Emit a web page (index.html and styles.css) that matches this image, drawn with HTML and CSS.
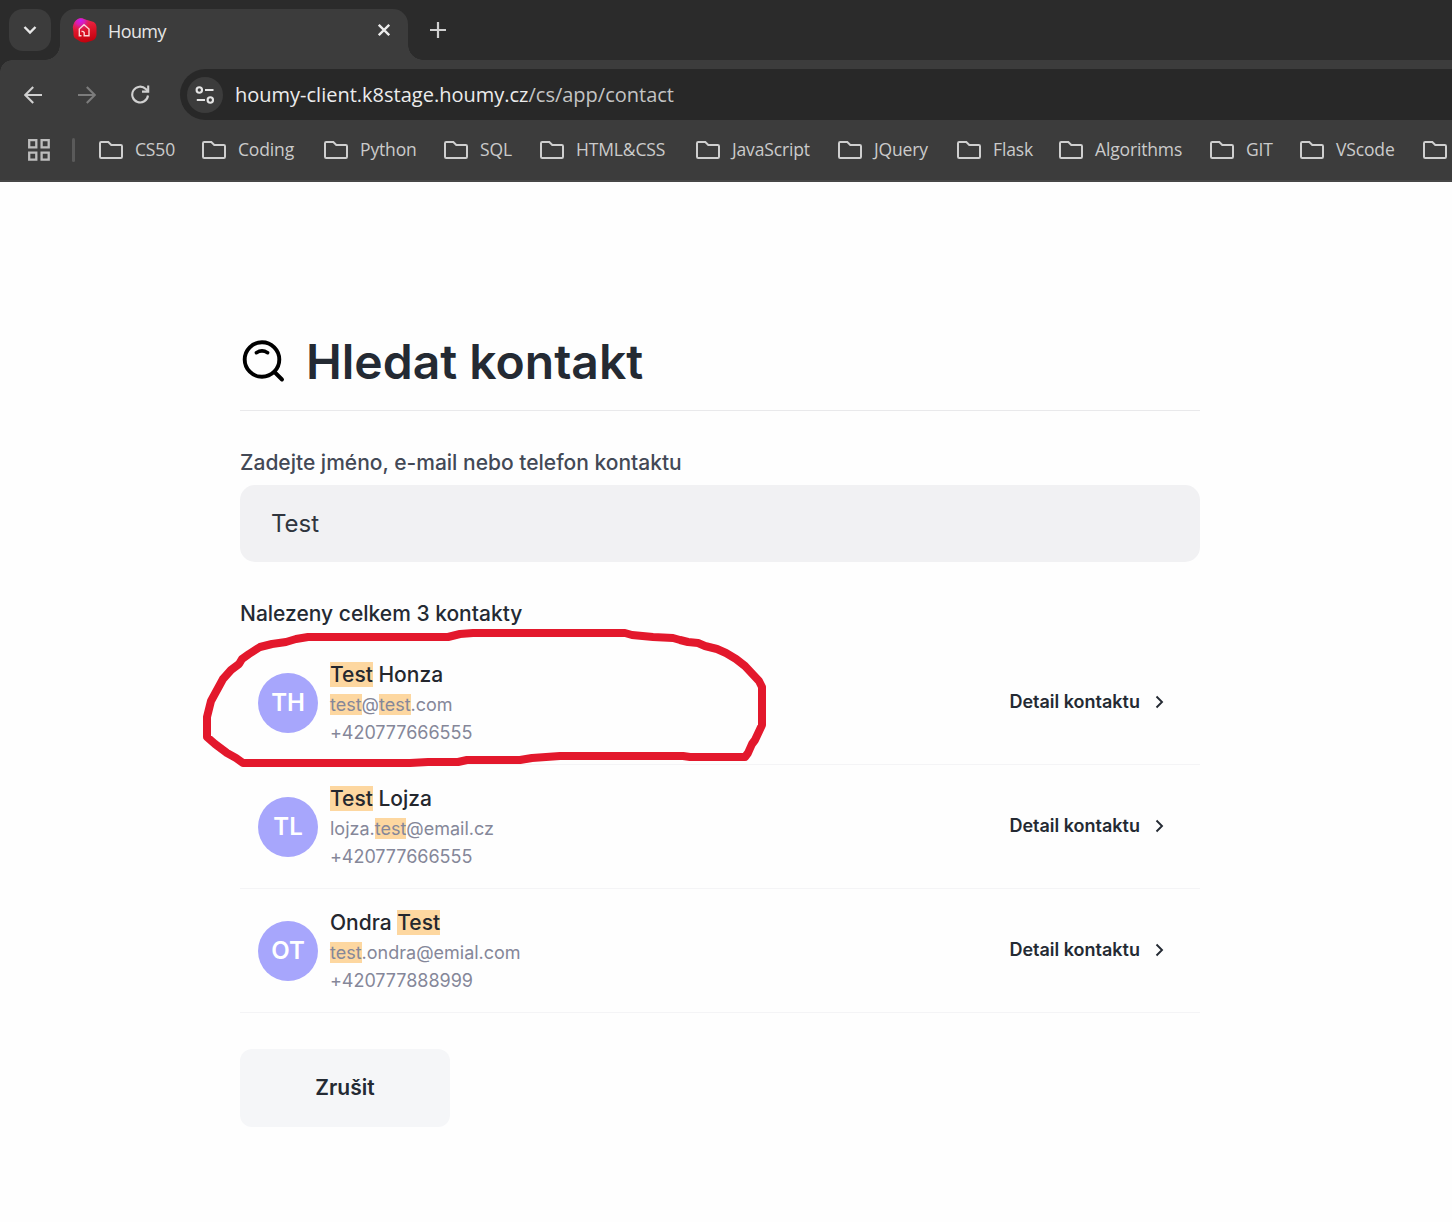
FILE: index.html
```html
<!DOCTYPE html>
<html lang="cs">
<head>
<meta charset="utf-8">
<title>Houmy</title>
<link rel="stylesheet" href="styles.css">
</head>
<body>
<svg class="defs" width="0" height="0" aria-hidden="true">
  <symbol id="folder" viewBox="0 0 24 18"><path d="M2.2 1H9.3L12.3 4H21.8Q23 4 23 5.200V15.800Q23 17 21.800 17H2.200Q1 17 1 15.800V2.200Q1 1 2.200 1Z" fill="none" stroke="#cfcfcf" stroke-width="2"/></symbol>
  <symbol id="chevron" viewBox="0 0 9 14"><path d="M1.500 1.500L7 7L1.500 12.500" fill="none" stroke="#242a33" stroke-width="1.900"/></symbol>
</svg>
<header class="browser">
  <div class="tabstrip">
    <button class="tab-search" aria-label="Tabs"><svg width="14" height="10" viewBox="0 0 14 10"><path d="M1.500 2L7 7.500L12.500 2" fill="none" stroke="#e8e8e8" stroke-width="2.400"/></svg></button>
    <div class="tab">
      <svg class="favicon" width="25" height="25" viewBox="0 0 25 25">
        <defs>
          <linearGradient id="red" x1=".4" y1="0" x2=".6" y2="1"><stop offset="0" stop-color="#f02c50"/><stop offset=".5" stop-color="#dc1428"/><stop offset="1" stop-color="#c0000c"/></linearGradient>
          <radialGradient id="pink" cx=".32" cy=".08" r=".5"><stop offset="0" stop-color="#c61cf5"/><stop offset=".4" stop-color="#d81cb8" stop-opacity=".9"/><stop offset="1" stop-color="#e01840" stop-opacity="0"/></radialGradient>
        </defs>
        <path d="M6 1Q9-.5 13 1.500L20 3.500Q24 4 24.500 9V17Q24 22 19 23L14 24.500Q9 25 5 21.500Q1 20 1.500 15L.8 9Q2 3 6 1Z" fill="url(#red)"/>
        <path d="M6 1Q9-.5 13 1.500L20 3.500Q24 4 24.500 9V17Q24 22 19 23L14 24.500Q9 25 5 21.500Q1 20 1.500 15L.8 9Q2 3 6 1Z" fill="url(#pink)"/>
        <path d="M9.500 17.800H7.300V11L12 6.800L17 11V17.800H12.200V14.500Q11 13 9.500 13.500" fill="none" stroke="#fbd5d6" stroke-width="1.400"/>
      </svg>
      <span class="tab-title">Houmy</span>
      <svg class="close" width="12" height="12" viewBox="0 0 12 12"><path d="M.8.8L11.200 11.200M11.200.8L.8 11.200" stroke="#ececec" stroke-width="2.300"/></svg>
    </div>
    <svg class="new-tab" width="16" height="16" viewBox="0 0 16 16"><path d="M8 0V16M0 8H16" stroke="#d0d0d0" stroke-width="2.200"/></svg>
  </div>
  <div class="toolbar">
    <svg width="18" height="18" viewBox="0 0 18 18"><path d="M18 9H1.500M9.200.9L1.200 9L9.200 17.100" fill="none" stroke="#d0d0d0" stroke-width="2.100"/></svg>
    <svg width="18" height="18" viewBox="0 0 18 18"><path d="M0 9H16.500M8.800.9L16.800 9L8.800 17.100" fill="none" stroke="#7c7c7c" stroke-width="2.100"/></svg>
    <svg width="19" height="19" viewBox="0 0 19 19"><path d="M17 10.500A7.900 7.900 0 1 1 14.800 4L17 6.200" fill="none" stroke="#d0d0d0" stroke-width="2.100"/><path d="M17.200 .5V6.600H11" fill="none" stroke="#d0d0d0" stroke-width="2.100"/></svg>
    <div class="omnibox">
      <span class="site-info"><svg width="20" height="18" viewBox="0 0 20 18"><g fill="none" stroke="#e4e4e4" stroke-width="2.100"><circle cx="4.300" cy="4" r="2.700"/><path d="M10 4H18.500M1.800 14H10"/><circle cx="15.300" cy="14" r="2.700"/></g></svg></span>
      <span class="url"><span class="host">houmy-client.k8stage.houmy.cz</span>/cs/app/contact</span>
    </div>
  </div>
  <nav class="bookmarks">
    <svg class="apps" width="22" height="22" viewBox="0 0 22 22"><path d="M1.200 1.200H8.300V8.300H1.200ZM13.600 1.200H20.700V8.300H13.600ZM1.200 13.600H8.300V20.700H1.200ZM13.600 13.600H20.700V20.700H13.600Z" fill="none" stroke="#bdbdbd" stroke-width="2.300"/></svg>
    <i class="divider"></i>
    <div class="folders">
      <span class="folder"><svg><use href="#folder"/></svg><span>CS50</span></span>
      <span class="folder"><svg><use href="#folder"/></svg><span>Coding</span></span>
      <span class="folder"><svg><use href="#folder"/></svg><span>Python</span></span>
      <span class="folder"><svg><use href="#folder"/></svg><span>SQL</span></span>
      <span class="folder"><svg><use href="#folder"/></svg><span>HTML&amp;CSS</span></span>
      <span class="folder"><svg><use href="#folder"/></svg><span>JavaScript</span></span>
      <span class="folder"><svg><use href="#folder"/></svg><span>JQuery</span></span>
      <span class="folder"><svg><use href="#folder"/></svg><span>Flask</span></span>
      <span class="folder"><svg><use href="#folder"/></svg><span>Algorithms</span></span>
      <span class="folder"><svg><use href="#folder"/></svg><span>GIT</span></span>
      <span class="folder"><svg><use href="#folder"/></svg><span>VScode</span></span>
      <span class="folder"><svg><use href="#folder"/></svg></span>
    </div>
  </nav>
</header>
<main class="page">
  <div class="title">
    <svg width="44" height="44" viewBox="0 0 44 44"><g fill="none" stroke="#000" stroke-width="3.900" stroke-linecap="round"><circle cx="21" cy="20.500" r="17.300"/><path d="M34 33.500L41 40.500"/><path d="M15.400 13.700Q21 10.100 26.600 13.700" stroke-width="3.500"/></g></svg>
    <h1>Hledat kontakt</h1>
  </div>
  <label class="label" for="q">Zadejte jméno, e-mail nebo telefon kontaktu</label>
  <input class="search" id="q" value="Test">
  <p class="summary">Nalezeny celkem 3 kontakty</p>
  <ul class="contacts">
    <li class="contact">
      <span class="avatar">TH</span>
      <div class="info"><div class="name"><mark>Test</mark> Honza</div><div class="line"><mark>test</mark>@<mark>test</mark>.com</div><div class="line phone">+420777666555</div></div>
      <a class="detail">Detail kontaktu<svg width="9" height="14"><use href="#chevron"/></svg></a>
    </li>
    <li class="contact">
      <span class="avatar">TL</span>
      <div class="info"><div class="name"><mark>Test</mark> Lojza</div><div class="line">lojza.<mark>test</mark>@email.cz</div><div class="line phone">+420777666555</div></div>
      <a class="detail">Detail kontaktu<svg width="9" height="14"><use href="#chevron"/></svg></a>
    </li>
    <li class="contact">
      <span class="avatar">OT</span>
      <div class="info"><div class="name">Ondra <mark>Test</mark></div><div class="line"><mark>test</mark>.ondra@emial.com</div><div class="line phone">+420777888999</div></div>
      <a class="detail">Detail kontaktu<svg width="9" height="14"><use href="#chevron"/></svg></a>
    </li>
  </ul>
  <button class="cancel">Zrušit</button>
</main>
<svg class="marker" width="566" height="142" viewBox="200 627 566 142"><path d="M308 637L296 639L286 642L272 644L260 647L249 654L242 659L239 664L231 670L223 679L211 701L207 717V737L215 744L227 753L236 758L243 763H410L428 762H458L467 760L520 760L532 758L560 756H683L690 757H745L748 753L752 744L755 740L762 725V687L759 681L745 666L736 659L726 653L717 649L705 646L698 643L688 642L680 640L673 638L653 637L632 635L625 633L618 633H473L460 634L448 637Z"/></svg>
</body>
</html>
```
FILE: styles.css
```css
* { box-sizing: border-box; }
body { margin: 0; height: 1222px; overflow: hidden; background: #fefefe; font-family: Inter, sans-serif; color: #242a33; }
button { border: 0; padding: 0; font-family: inherit; }
svg { display: block; flex: none; }
.defs { position: absolute; }

.browser { height: 182px; background: #3c3c3c; border-bottom: 2px solid #474747; font-family: "Open Sans", "Noto Sans", sans-serif; overflow: hidden; }
.tabstrip { display: flex; height: 60px; padding: 9px 0 0 9px; background: #2b2b2b; }
.tab-search { position: relative; z-index: 1; display: flex; align-items: center; justify-content: center; width: 42px; height: 42px; border-radius: 14px; background: #3c3c3c; }
.tab { position: relative; display: flex; align-items: center; width: 348px; height: 51px; margin-left: 9px; padding: 0 18px 9px 12px; border-radius: 15px 15px 0 0; background: #3c3c3c; }
.tab::before, .tab::after { content: ""; position: absolute; bottom: 0; width: 15px; height: 15px; }
.tab::before { left: -15px; background: radial-gradient(circle at 0 0, #2b2b2b 14.500px, #3c3c3c 15px); }
.tab::after { right: -15px; background: radial-gradient(circle at 100% 0, #2b2b2b 14.500px, #3c3c3c 15px); }
.tab-title { flex: 1; margin: 2px 0 0 11px; font-size: 18px; letter-spacing: -.6px; color: #e6e6e6; }
.new-tab { margin: 13px 0 0 22px; }

.toolbar { display: flex; align-items: center; height: 70px; padding: 0 0 1px 24px; background: radial-gradient(circle at 12px 12px, #3c3c3c 11.500px, #2b2b2b 12px) 0 0 / 12px 12px no-repeat; }
.toolbar > svg + svg { margin-left: 36px; }
.toolbar > svg:nth-of-type(3) { margin-left: 35px; }
.omnibox { display: flex; align-items: center; flex: 1; height: 51px; margin-left: 30px; padding-left: 7px; border-radius: 26px 0 0 26px; background: #282828; }
.site-info { display: flex; align-items: center; justify-content: center; width: 36px; height: 36px; border-radius: 50%; background: #3c3c3c; }
.url { margin-left: 12px; font-size: 20px; letter-spacing: 0; color: #c4c4c4; white-space: nowrap; }
.host { color: #ececec; }

.bookmarks { display: flex; align-items: center; height: 40px; padding-left: 28px; }
.divider { flex: none; width: 3px; height: 24px; margin: 0 24px 0 22px; border-radius: 2px; background: #5a5a5a; }
.folders { display: grid; flex: none; grid-template-columns: 103px 122px 120px 96px 156px 142px 119px 102px 151px 90px 123px 29px; }
.folder { display: flex; align-items: center; gap: 12px; font-size: 17.500px; letter-spacing: -.15px; line-height: 24px; color: #cbcbcb; white-space: nowrap; }
.folder span { padding-bottom: 2px; }
.folder svg { width: 24px; height: 18px; }

.page { width: 960px; margin-left: 240px; padding-top: 147px; }
.title { display: flex; align-items: center; gap: 22px; height: 82px; padding-bottom: 18px; border-bottom: 1px solid #e9e9eb; }
.title svg { margin: 0 -1px 0 1px; }
h1 { margin: 2px 0 0; font-size: 48px; font-weight: 600; line-height: 60px; }
.label { display: block; margin-top: 36px; font-size: 21px; font-weight: 500; line-height: 32px; color: #434956; }
.search { display: block; width: 960px; height: 77px; margin-top: 6px; padding: 0 31px; border: 0; border-radius: 15px; background: #f1f1f3; font: 400 24px Inter, sans-serif; color: #30353e; }
.summary { margin: 36px 0 0; font-size: 21px; font-weight: 500; line-height: 32px; }
.contacts { margin: 11px 0 0; padding: 0; list-style: none; }
.contact { display: flex; height: 124px; padding: 0 36px 0 18px; border-bottom: 1px solid #f4f4f6; align-items: center; }
.avatar { display: flex; align-items: center; justify-content: center; width: 60px; height: 60px; border-radius: 50%; background: #a7a6fc; color: #fff; font-size: 24px; font-weight: 600; }
.info { flex: 1; margin-left: 12px; }
.name { font-size: 21px; font-weight: 500; line-height: 32px; color: #24272e; }
.line { font-size: 18px; line-height: 28px; color: #858799; }
.phone { letter-spacing: -.04px; }
mark { background: #fdd7a0; color: inherit; }
.detail { display: flex; align-items: center; gap: 15px; padding-bottom: 2px; font-size: 18px; font-weight: 600; }
.cancel { display: block; width: 210px; height: 78px; margin-top: 36px; padding-bottom: 2px; border-radius: 12px; background: #f5f6f8; font-size: 21px; font-weight: 600; color: #242a33; }
.marker { position: absolute; left: 200px; top: 627px; fill: none; stroke: #e3182c; stroke-width: 8; stroke-linejoin: round; }
```
